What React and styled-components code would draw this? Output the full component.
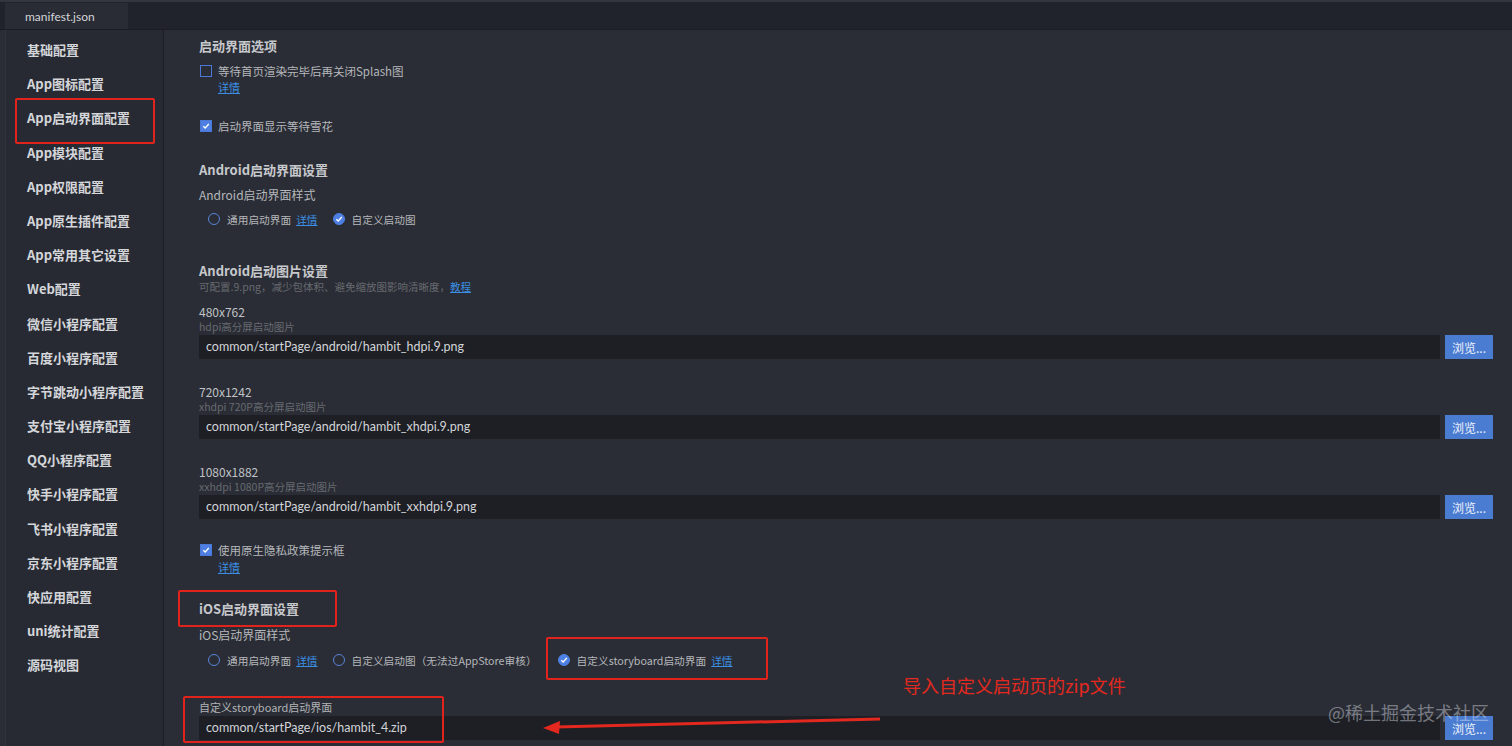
import styled, { createGlobalStyle } from "styled-components"

const GlobalStyle = createGlobalStyle`
body {
  margin: 0;
  background: #23262e;
  font-family: "Noto Sans CJK SC", "Noto Sans", sans-serif;
}
`

const Window = styled.div`
position: relative;
width: 1512px;
height: 746px;
overflow: hidden;
display: flex;
flex-direction: column;
background: #2a2d35;
`

const TabBar = styled.div`
height: 27px;
padding-left: 5px;
display: flex;
align-items: flex-end;
background: #20232b;
border-top: 2px solid #33363e;
border-bottom: 1px solid #1b1d23;
`

const Tab = styled.div`
width: 123px;
height: 26px;
box-sizing: border-box;
padding-left: 20px;
display: flex;
align-items: center;
background: #292c34;
color: #d3d5d9;
font-family: "Lato", "Noto Sans CJK SC", sans-serif;
font-size: 12px;
`

const Body = styled.div`
flex: 1;
display: flex;
min-height: 0;
`

const Sidebar = styled.div`
width: 157px;
margin-left: 5px;
padding-top: 3px;
background: #272a32;
border-left: 1px solid #30333b;
border-right: 1px solid #1d1f25;
`

const NavItem = styled.div`
height: 34.2px;
line-height: 34.2px;
padding-left: 21px;
color: #d4d6da;
font-size: 13px;
font-weight: 700;
white-space: nowrap;
`

const Content = styled.div`
flex: 1;
padding: 7px 19px 0 35px;
`

const Title = styled.div`
margin-top: ${p => p.$mt || 0}px;
height: 18px;
line-height: 18px;
font-size: 13px;
font-weight: 700;
color: #c6c8cc;
`

const Label = styled.div`
margin-top: ${p => p.$mt || 0}px;
height: 18px;
line-height: 18px;
font-size: 12px;
color: #b5b7bb;
`

const Small = styled.div`
margin-top: ${p => p.$mt || 0}px;
height: 14px;
line-height: 14px;
font-size: ${p => (p.$light ? 11 : 10.5)}px;
color: ${p => (p.$light ? "#b0b2b6" : "#676a70")};
white-space: nowrap;
`

const Size = styled.div`
margin-top: ${p => p.$mt || 0}px;
height: 16px;
line-height: 16px;
font-size: 12px;
color: #c0c2c6;
`

const Link = styled.a`
color: #3b8ee2;
text-decoration: underline;
font-size: inherit;
cursor: pointer;
margin-right: ${p => p.$mr || 0}px;
`

const LinkLine = styled.div`
margin-top: ${p => p.$mt || 0}px;
height: 14px;
line-height: 14px;
padding-left: 19px;
font-size: 11px;
`

const CheckRow = styled.label`
margin-top: ${p => p.$mt || 0}px;
height: 18px;
display: flex;
align-items: center;
gap: 6px;
padding-left: 1px;
font-size: 11.5px;
color: #b5b7bb;
`

const Box = styled.span`
width: 12px;
height: 12px;
box-sizing: border-box;
border: 1.5px solid #4b78d4;
background: ${p => (p.$on ? "#4d80e2" : "transparent")};
display: flex;
align-items: center;
justify-content: center;
`

const RadioRow = styled.div`
margin-top: ${p => p.$mt || 0}px;
height: 20px;
display: flex;
align-items: center;
padding-left: 9px;
font-size: 10.7px;
color: #b5b7bb;
`

const RadioItem = styled.span`
display: flex;
align-items: center;
gap: 7px;
margin-right: ${p => p.$mr || 15}px;
white-space: nowrap;
`

const Circle = styled.span`
width: 12px;
height: 12px;
box-sizing: border-box;
border-radius: 50%;
border: 1.5px solid ${p => (p.$on ? "#4d80e2" : "#5a84d8")};
background: ${p => (p.$on ? "#4d80e2" : "transparent")};
display: flex;
align-items: center;
justify-content: center;
`

const InputRow = styled.div`
margin-top: ${p => p.$mt || 0}px;
display: flex;
gap: 5px;
height: 24px;
`

const Field = styled.div`
flex: 1;
background: #1d1f25;
color: #d2d4d8;
font-family: "Lato", "Noto Sans CJK SC", sans-serif;
font-size: 12.5px;
line-height: 24px;
padding-left: 7px;
`

const Browse = styled.button`
width: 48px;
border: none;
padding: 0;
background: #4a7cd2;
color: #eef2fb;
font-family: inherit;
font-size: 12px;
`

const Mark = styled.div`
position: absolute;
left: ${p => p.$x}px;
top: ${p => p.$y}px;
width: ${p => p.$w}px;
height: ${p => p.$h}px;
box-sizing: border-box;
border: 2px solid #e1231b;
border-radius: 2px;
pointer-events: none;
`

const Note = styled.div`
position: absolute;
left: 903px;
top: 673px;
font-size: 18px;
line-height: 24px;
color: #e3281f;
white-space: nowrap;
`

const Watermark = styled.div`
position: absolute;
left: 1328px;
top: 700px;
font-size: 18px;
line-height: 24px;
color: rgba(235, 238, 245, 0.42);
white-space: nowrap;
`

const Arrow = styled.svg`
position: absolute;
left: 540px;
top: 712px;
`

const Tick = () => (
  <svg width="8" height="8" viewBox="0 0 8 8">
    <path d="M1.3 4.2 L3.2 6 L6.8 2" fill="none" stroke="#fff" strokeWidth="1.3" />
  </svg>
)

const nav = [
  "基础配置", "App图标配置", "App启动界面配置", "App模块配置", "App权限配置",
  "App原生插件配置", "App常用其它设置", "Web配置", "微信小程序配置", "百度小程序配置",
  "字节跳动小程序配置", "支付宝小程序配置", "QQ小程序配置", "快手小程序配置", "飞书小程序配置",
  "京东小程序配置", "快应用配置", "uni统计配置", "源码视图",
]

function Check({ on, children, mt }) {
  return (
    <CheckRow $mt={mt}>
      <Box $on={on}>{on && <Tick />}</Box>
      {children}
    </CheckRow>
  )
}

function Radio({ on, children, mr }) {
  return (
    <RadioItem $mr={mr}>
      <Circle $on={on}>{on && <Tick />}</Circle>
      {children}
    </RadioItem>
  )
}

function PathInput({ value, mt }) {
  return (
    <InputRow $mt={mt}>
      <Field>{value}</Field>
      <Browse>浏览...</Browse>
    </InputRow>
  )
}

export default function App() {
  return (
    <Window>
      <GlobalStyle />
      <TabBar>
        <Tab>manifest.json</Tab>
      </TabBar>
      <Body>
        <Sidebar>
          {nav.map(n => <NavItem key={n}>{n}</NavItem>)}
        </Sidebar>
        <Content>
          <Title>启动界面选项</Title>
          <Check mt={7}>等待首页渲染完毕后再关闭Splash图</Check>
          <LinkLine><Link>详情</Link></LinkLine>
          <Check on mt={23}>启动界面显示等待雪花</Check>

          <Title $mt={26}>Android启动界面设置</Title>
          <Label $mt={7}>Android启动界面样式</Label>
          <RadioRow $mt={5}>
            <Radio mr={5}>通用启动界面</Radio>
            <Link $mr={15}>详情</Link>
            <Radio on>自定义启动图</Radio>
          </RadioRow>

          <Title $mt={33}>Android启动图片设置</Title>
          <Small>可配置.9.png，减少包体积、避免缩放图影响清晰度，<Link>教程</Link></Small>
          <Size $mt={10}>480x762</Size>
          <Small>hdpi高分屏启动图片</Small>
          <PathInput mt={1} value="common/startPage/android/hambit_hdpi.9.png" />
          <Size $mt={25}>720x1242</Size>
          <Small>xhdpi 720P高分屏启动图片</Small>
          <PathInput mt={1} value="common/startPage/android/hambit_xhdpi.9.png" />
          <Size $mt={25}>1080x1882</Size>
          <Small>xxhdpi 1080P高分屏启动图片</Small>
          <PathInput mt={1} value="common/startPage/android/hambit_xxhdpi.9.png" />

          <Check on mt={22}>使用原生隐私政策提示框</Check>
          <LinkLine $mt={1}><Link>详情</Link></LinkLine>

          <Title $mt={26}>iOS启动界面设置</Title>
          <Label $mt={8}>iOS启动界面样式</Label>
          <RadioRow $mt={6}>
            <Radio mr={5}>通用启动界面</Radio>
            <Link $mr={15}>详情</Link>
            <Radio mr={21}>自定义启动图（无法过AppStore审核）</Radio>
            <Radio on mr={5}>自定义storyboard启动界面</Radio>
            <Link>详情</Link>
          </RadioRow>

          <Small $light $mt={30}>自定义storyboard启动界面</Small>
          <PathInput mt={2} value="common/startPage/ios/hambit_4.zip" />
        </Content>
      </Body>

      <Mark $x={15} $y={98} $w={140} $h={46} />
      <Mark $x={178} $y={590} $w={159} $h={37} />
      <Mark $x={546} $y={637} $w={222} $h={43} />
      <Mark $x={183} $y={696} $w={261} $h={47} />
      <Note>导入自定义启动页的zip文件</Note>
      <Arrow width="345" height="26" viewBox="0 0 345 26">
        <path d="M16 15 L340 7" stroke="#e3281f" strokeWidth="3" fill="none" />
        <path d="M3 16 L20 9 L19 22 Z" fill="#e3281f" />
      </Arrow>
      <Watermark>@稀土掘金技术社区</Watermark>
    </Window>
  )
}
